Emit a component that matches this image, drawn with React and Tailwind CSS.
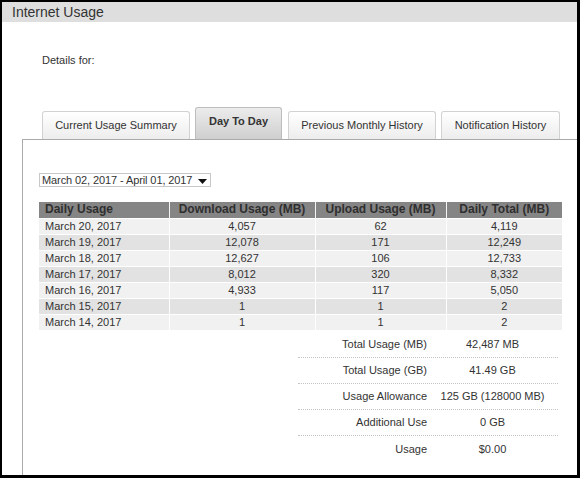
import React from 'react'

const rows = [
  ['March 20, 2017', '4,057', '62', '4,119'],
  ['March 19, 2017', '12,078', '171', '12,249'],
  ['March 18, 2017', '12,627', '106', '12,733'],
  ['March 17, 2017', '8,012', '320', '8,332'],
  ['March 16, 2017', '4,933', '117', '5,050'],
  ['March 15, 2017', '1', '1', '2'],
  ['March 14, 2017', '1', '1', '2'],
]

const totals = [
  ['Total Usage (MB)', '42,487 MB'],
  ['Total Usage (GB)', '41.49 GB'],
  ['Usage Allowance', '125 GB (128000 MB)'],
  ['Additional Use', '0 GB'],
  ['Usage', '$0.00'],
]

const Tab = ({ label, width, active }) => (
  <div
    className={
      active
        ? 'h-[32px] shrink-0 mr-px flex items-start justify-center pt-[5px] rounded-t-[3px] border border-b-0 border-[#bdbdbd] bg-gradient-to-b from-[#ececec] to-[#cfcfcf] font-bold text-[11px] text-[#333]'
        : 'h-[28px] shrink-0 flex items-center justify-center rounded-t-[3px] border border-b-0 border-[#d2d2d2] bg-gradient-to-b from-[#ffffff] to-[#ededed] text-[11px] text-[#333]'
    }
    style={{ width }}
  >
    {label}
  </div>
)

const App = () => {
  return (
    <div className="w-[580px] h-[478px] bg-white border-black border-l-2 border-t-2 border-r-[3px] border-b-[3px] flex flex-col font-['Liberation_Sans',Arial,sans-serif] text-[#333]">
      <div className="h-[20px] shrink-0 bg-[#dedede] pl-[10px] text-[14px] leading-[21px] text-[#333]">Internet Usage</div>

      <div className="pl-[40px] pt-[31px] text-[11px] leading-[14px]">Details for:</div>

      <div className="flex items-end mt-[40px] pl-[40px] gap-[5px]">
        <Tab label="Current Usage Summary" width={148} />
        <Tab label="Day To Day" width={87} active />
        <Tab label="Previous Monthly History" width={148} />
        <Tab label="Notification History" width={119} />
      </div>

      <div className="flex-1 ml-[20px] border-l border-t border-[#aaaaaa] pl-[16px] pt-[33px]">
        <div className="w-[172px] h-[14px] border border-[#c8c8c8] flex items-center justify-between pl-[2px] pr-[3px] text-[11px] leading-[12px]">
          <span className="tracking-[-0.1px]">March 02, 2017 - April 01, 2017</span>
          <svg width="9" height="5" viewBox="0 0 9 5" className="mt-[3px] shrink-0">
            <path d="M0 0 L9 0 L4.5 5 Z" fill="#111" />
          </svg>
        </div>

        <table className="mt-[15px] w-[523px] border-collapse text-[11px] leading-[15px] table-fixed">
          <colgroup>
            <col className="w-[130px]" />
            <col className="w-[146px]" />
            <col className="w-[131px]" />
            <col className="w-[116px]" />
          </colgroup>
          <thead>
            <tr className="h-[16px] bg-[#858585] text-[#2f2f2f] text-[12px]">
              <th className="text-left pl-[6px] font-bold border-r border-[#f4f4f4]">Daily Usage</th>
              <th className="text-center font-bold border-r border-[#f4f4f4]">Download Usage (MB)</th>
              <th className="text-center font-bold border-r border-[#f4f4f4]">Upload Usage (MB)</th>
              <th className="text-center font-bold">Daily Total (MB)</th>
            </tr>
          </thead>
          <tbody>
            {rows.map((r, i) => (
              <tr key={i} className={`h-[16px] border-t border-white ${i % 2 === 0 ? 'bg-[#f1f1f1]' : 'bg-[#e2e2e2]'}`}>
                <td className="pl-[6px] border-r border-white">{r[0]}</td>
                <td className="text-center border-r border-white">{r[1]}</td>
                <td className="text-center border-r border-white">{r[2]}</td>
                <td className="text-center">{r[3]}</td>
              </tr>
            ))}
          </tbody>
        </table>

        <div className="mt-[2px] ml-[259px] w-[260px] text-[11px]">
          {totals.map(([k, v], i) => (
            <div key={k} className={`h-[26px] flex items-center ${i < 4 ? 'border-b border-dotted border-[#c4c4c4]' : ''}`}>
              <div className="w-[129px] text-right">{k}</div>
              <div className="flex-1 text-center">{v}</div>
            </div>
          ))}
        </div>
      </div>
    </div>
  )
}

export default App
